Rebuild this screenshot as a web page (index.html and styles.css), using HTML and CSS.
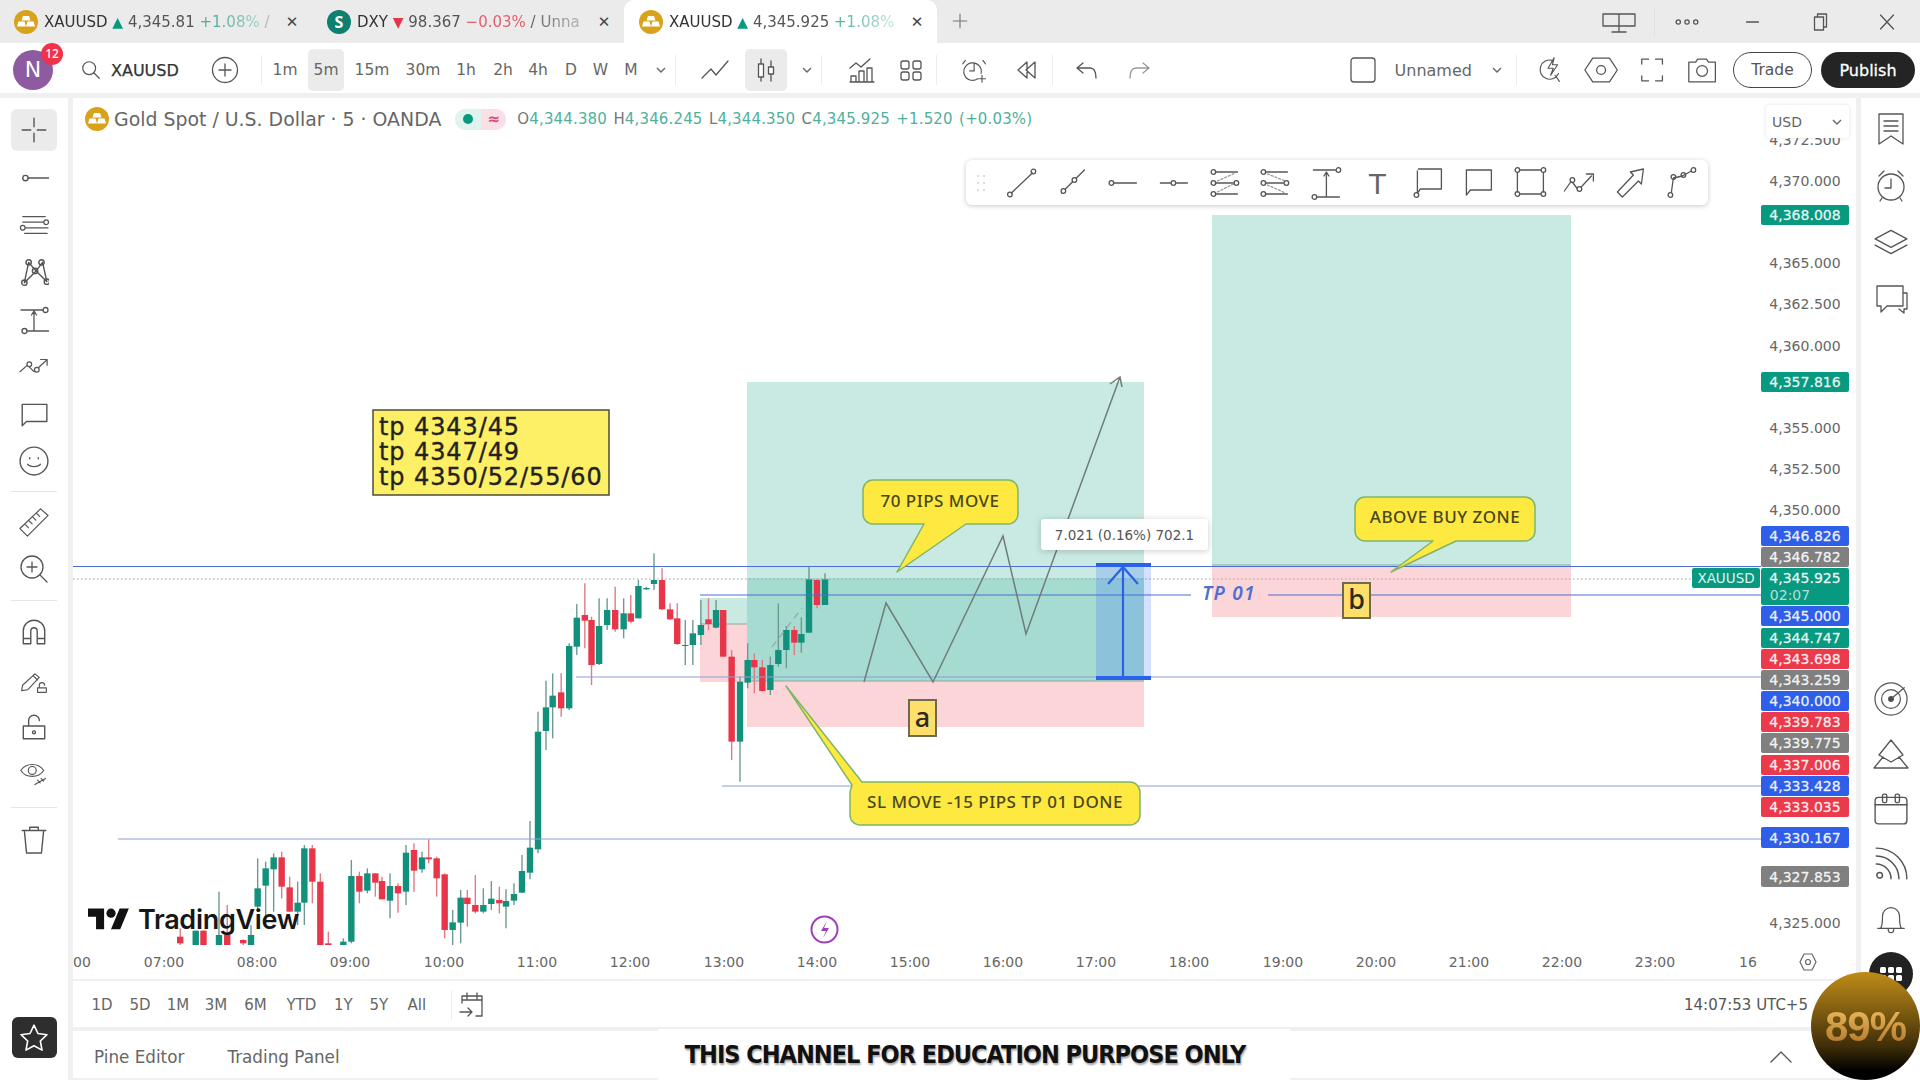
FILE: index.html
```html
<!DOCTYPE html>
<html lang="en">
<head>
<meta charset="utf-8">
<title>XAUUSD chart</title>
<link rel="stylesheet" href="styles.css">
</head>
<body>
<div class="app">
  <header class="tabs">
    <div class="tab">
      <svg class="coin" viewBox="0 0 24 24"><circle cx="12" cy="12" r="12" fill="#d9a21b"/><path class="bars" d="M9 6h6l1.500 4.500h-9zM4.500 11.500h6l1.500 5H3zM13.500 11.500h6l1.500 5h-9z"/></svg>
      <div class="tab-label"><b>XAUUSD</b> <i class="up">▲</i> 4,345.81 <span class="pos">+1.08%</span> /</div>
      <span class="x">✕</span>
    </div>
    <div class="tab">
      <span class="coin dxy">S</span>
      <div class="tab-label"><b>DXY</b> <i class="down">▼</i> 98.367 <span class="neg">−0.03%</span> / Unna</div>
      <span class="x">✕</span>
    </div>
    <div class="tab active">
      <svg class="coin" viewBox="0 0 24 24"><circle cx="12" cy="12" r="12" fill="#d9a21b"/><path class="bars" d="M9 6h6l1.500 4.500h-9zM4.500 11.500h6l1.500 5H3zM13.500 11.500h6l1.500 5h-9z"/></svg>
      <div class="tab-label"><b>XAUUSD</b> <i class="up">▲</i> 4,345.925 <span class="pos">+1.08%</span></div>
      <span class="x">✕</span>
    </div>
    <svg class="plus" viewBox="0 0 20 20"><path d="M10 2v16M2 10h16"/></svg>
    <div class="winctl">
      <svg class="w70 ic" viewBox="0 0 70 28"><path d="M19 6h32v12H19zM35 6v18M28 24h14"/></svg>
      <span class="vsep"></span>
      <svg class="w64 ic" viewBox="0 0 66 28"><circle cx="24" cy="14" r="2.200"/><circle cx="33" cy="14" r="2.200"/><circle cx="42" cy="14" r="2.200"/></svg>
      <svg class="w66 ic" viewBox="0 0 66 28"><path d="M27 14h12"/></svg>
      <svg class="w66 ic" viewBox="0 0 66 28"><path d="M28 9h9v13h-9zM31 9V6h9v13h-3"/></svg>
      <svg class="w66 ic" viewBox="0 0 66 28"><path d="M27 7l13 14M40 7L27 21"/></svg>
    </div>
  </header>

  <nav class="toolbar">
    <div class="avatar">N<span class="badge">12</span></div>
    <svg class="ic search" viewBox="0 0 24 24"><circle cx="10" cy="10" r="7"/><path d="M15 15l6 6"/></svg>
    <span class="sym">XAUUSD</span>
    <svg class="ic addc" viewBox="0 0 28 28"><circle cx="14" cy="14" r="12.500"/><path d="M14 8v12M8 14h12"/></svg>
    <span class="vsep"></span>
    <span class="tf w46">1m</span><span class="tf w36 on">5m</span><span class="tf w56">15m</span><span class="tf w46">30m</span><span class="tf w40">1h</span><span class="tf w34">2h</span><span class="tf w36">4h</span><span class="tf w30">D</span><span class="tf w29">W</span><span class="tf w32">M</span>
    <span class="tf w28"><svg class="chev" viewBox="0 0 10 6"><path d="M1 1l4 4 4-4"/></svg></span>
    <span class="vsep"></span>
    <svg class="ic w50 m14" viewBox="0 0 50 28"><path d="M12 22l9-9 5 6 12-14"/></svg>
    <span class="tf w42 on m5"><svg class="ic cnd" viewBox="0 0 28 28"><path d="M9 3v22M19 5v20"/><rect x="6.500" y="8" width="5" height="13" fill="#fff"/><rect x="16.500" y="11" width="5" height="7" fill="#fff"/></svg></span>
    <span class="tf w28 m6"><svg class="chev" viewBox="0 0 10 6"><path d="M1 1l4 4 4-4"/></svg></span>
    <span class="vsep"></span>
    <svg class="ic w50 m13h" viewBox="0 0 50 28"><path d="M14 26h24M15 26v-6h5v6M23 26V15h5v11M31 26V12h5v14M14 12l6-5 5 4 9-8"/></svg>
    <svg class="ic w50" viewBox="0 0 50 28"><rect x="15" y="5" width="8" height="8" rx="2"/><rect x="27" y="5" width="8" height="8" rx="2"/><rect x="15" y="16" width="8" height="8" rx="2"/><rect x="27" y="16" width="8" height="8" rx="2"/></svg>
    <span class="vsep"></span>
    <svg class="ic w50 m13" viewBox="0 0 50 32"><path d="M28 26a10 10 0 1 1 4-6M24 9v8h-5M14 5l-3 4M34 5l3 4M33 22v8M29 26h8"/></svg>
    <svg class="ic w50 m2" viewBox="0 0 50 28"><path d="M25 6l-9 8 9 8zM33 6l-9 8 9 8z"/></svg>
    <span class="vsep"></span>
    <svg class="ic w50 m10" viewBox="0 0 50 28"><path d="M20 7l-6 5 6 5M14 12h13c5 0 6 5 6 10"/></svg>
    <svg class="ic w50 lite" viewBox="0 0 50 28"><path d="M30 7l6 5-6 5M36 12H23c-5 0-6 5-6 10"/></svg>
    <span class="grow"></span>
    <svg class="ic w44" viewBox="0 0 44 28"><rect x="10" y="2" width="24" height="24" rx="3"/></svg>
    <span class="layout">Unnamed</span>
    <span class="tf w28"><svg class="chev" viewBox="0 0 10 6"><path d="M1 1l4 4 4-4"/></svg></span>
    <span class="vsep"></span>
    <svg class="ic w51" viewBox="0 0 51 32"><path d="M27 5a11 11 0 1 0 7 15M30 22l5 7M29 2l-7 12h6l-3 8 8-12h-6z"/></svg>
    <svg class="ic w51" viewBox="0 0 51 28"><path d="M17 2h17l8 12-8 12H17L9 14z"/><circle cx="25.500" cy="14" r="4.500"/></svg>
    <svg class="ic w51" viewBox="0 0 51 28"><path d="M15 8V3h7M29 3h7v5M36 20v5h-7M22 25h-7v-5"/></svg>
    <svg class="ic w51" viewBox="0 0 51 28"><path d="M12 6h7l2-3h9l2 3h7v20H12z"/><circle cx="25.500" cy="15" r="5.500"/></svg>
    <span class="btn trade">Trade</span>
    <span class="btn publish">Publish</span>
  </nav>

  <div class="main">
    <aside class="lefttools">
      <div class="lt on"><svg class="ic" viewBox="0 0 28 28"><path d="M14 3v8M14 17v8M3 14h8M17 14h8"/></svg></div>
      <div class="lt"><svg class="ic" viewBox="0 0 28 28"><circle cx="6" cy="14" r="2.500"/><path d="M8.500 14H28"/></svg></div>
      <div class="lt"><svg class="ic" viewBox="0 0 32 28"><path d="M4 5h24M4 11h22M7 17h24M6 23h24"/><circle cx="29" cy="11" r="2.500"/><circle cx="4" cy="17" r="2.500"/></svg></div>
      <div class="lt"><svg class="ic" viewBox="0 0 28 28"><path d="M5 24L9 5l7 8 6-8 4 18-10-10z"/><circle cx="5" cy="24" r="2.500"/><circle cx="9" cy="5" r="2.500"/><circle cx="15" cy="13" r="2.500"/><circle cx="21" cy="5" r="2.500"/><circle cx="26" cy="23" r="2.500"/></svg></div>
      <div class="lt"><svg class="ic" viewBox="0 0 30 30"><path d="M2 5h22M8 26h22M15 26V7M12.500 10L15 6l2.500 4"/><circle cx="26.500" cy="5" r="2.500"/><circle cx="5.500" cy="26" r="2.500"/></svg></div>
      <div class="lt"><svg class="ic" viewBox="0 0 32 24"><path d="M1 17l8-7 7 7 13-12M23 4h7v6"/><circle cx="11" cy="9" r="2.500" fill="#fff"/><circle cx="19" cy="15" r="2.500" fill="#fff"/></svg></div>
      <div class="lt"><svg class="ic" viewBox="0 0 28 28"><path d="M3 5h23v16H7l-4 4z"/></svg></div>
      <div class="lt"><svg class="ic" viewBox="0 0 28 28"><circle cx="14" cy="14" r="13"/><path d="M8 17c2 3 10 3 12 0M10 11v1M18 11v1"/></svg></div>
      <div class="lsep s1"></div>
      <div class="lt"><svg class="ic" viewBox="0 0 32 32"><path d="M1 23L23 2l8 7L9 31zM7 19l3 3M11 15l3 3M15 11l3 3M19 7l3 3"/></svg></div>
      <div class="lt"><svg class="ic" viewBox="0 0 30 30"><circle cx="13" cy="13" r="11"/><path d="M13 8v10M8 13h10M21 21l7 7"/></svg></div>
      <div class="lsep s2"></div>
      <div class="lt"><svg class="ic" viewBox="0 0 28 28"><path d="M4 25V13a10 10 0 0 1 20 0v12h-7V13a3 3 0 0 0-6 0v12zM4 20h7M17 20h7"/></svg></div>
      <div class="lt"><svg class="ic" viewBox="0 0 34 30"><path d="M4 21L18 8l5 4-13 14-7 1zM16 10l5 5M21 24h10v5H21zM23 24v-3a3 3 0 0 1 6 0"/></svg></div>
      <div class="lt"><svg class="ic" viewBox="0 0 28 28"><path d="M4 13h20v12H4zM9 13V8a5 5 0 0 1 10 0"/><circle cx="14" cy="19" r="1.400"/></svg></div>
      <div class="lt"><svg class="ic" viewBox="0 0 34 30"><path d="M2 11c6-9 20-9 26 0-6 9-20 9-26 0z"/><circle cx="15" cy="11" r="4.500"/><path d="M18 27l12-7M21 22l3 3M25 20l3 3"/></svg></div>
      <div class="lsep s3"></div>
      <div class="lt"><svg class="ic" viewBox="0 0 28 28"><path d="M5 6h18l-2 21H7zM3 6h22M10 6V3h8v3"/></svg></div>
      <div class="star"><svg viewBox="0 0 28 28"><path d="M14 2l3.700 7.800 8.400 1.100-6.200 5.900 1.600 8.500L14 21.200l-7.500 4.100 1.600-8.500-6.200-5.900 8.400-1.100z"/></svg></div>
    </aside>

    <section class="center">
      <div class="chart">
        <svg class="plot" viewBox="73 98 1783 883" width="1783" height="883">
          <defs><clipPath id="pane"><rect x="73" y="98" width="1688" height="847"/></clipPath></defs>

          <!-- position zones -->
          <rect class="zg" x="747" y="382" width="397" height="299"/>
          <rect class="zd" x="747" y="578" width="397" height="103"/>
          <rect class="zp" x="747" y="681" width="397" height="46"/>
          <rect class="zg" x="1212" y="215" width="359" height="350"/>
          <rect class="zp" x="1212" y="565" width="359" height="52"/>
          <rect class="zg" x="700" y="598" width="47" height="26"/>
          <rect class="zp" x="700" y="624" width="47" height="58"/>
          <path class="zl" d="M700 624h47M747 681h397M1212 565h359"/>

          <g id="candles" clip-path="url(#pane)"></g>
          <path class="dash" d="M772 647l30-39"/>

          <!-- levels -->
          <path class="lv" d="M73 566.500H1761M700 595H1191M1268 595H1761"/>
          <path class="lv soft" d="M576 677H1761M722 786H1761M118 839H1761"/>
          <path class="pxl" d="M73 579H1692"/>

          <!-- forecast path -->
          <path class="fore" d="M864 682l22-79 47 79 70-146 23 98 94-257M1110 384l10-7 2 10"/>

          <!-- measure tool -->
          <rect class="mbox" x="1096" y="563" width="55" height="116"/>
          <path class="mline" d="M1096 565h55M1096 678h55"/>
          <path class="marrow" d="M1123 678V567M1108 584l15-17 15 17"/>

          <!-- callouts -->
          <path class="call" d="M873 480h135a10 10 0 0 1 10 10v24a10 10 0 0 1-10 10h-42l-69 48 27-48h-51a10 10 0 0 1-10-10v-24a10 10 0 0 1 10-10z"/>
          <text class="calltx" x="940" y="507">70 PIPS MOVE</text>
          <path class="call" d="M1365 497h160a10 10 0 0 1 10 10v24a10 10 0 0 1-10 10h-69l-65 31 42-31h-68a10 10 0 0 1-10-10v-24a10 10 0 0 1 10-10z"/>
          <text class="calltx" x="1445" y="523">ABOVE BUY ZONE</text>
          <path class="call" d="M862 782h268a10 10 0 0 1 10 10v23a10 10 0 0 1-10 10H860a10 10 0 0 1-10-10v-23l2-7-66-99z"/>
          <text class="calltx" x="995" y="808">SL MOVE -15 PIPS TP 01 DONE</text>

          <rect class="tag" x="909" y="700" width="27" height="36"/>
          <text class="tagtx" x="922.500" y="727">a</text>
          <rect class="tag" x="1343" y="583" width="27" height="35"/>
          <text class="tagtx" x="1356.500" y="609">b</text>

          <text class="tp01" x="1229" y="600">TP 01</text>

          <rect class="note" x="373" y="410" width="236" height="85"/>
          <text class="notetx" x="379" y="435">tp 4343/45</text>
          <text class="notetx" x="379" y="460">tp 4347/49</text>
          <text class="notetx" x="379" y="485">tp 4350/52/55/60</text>

          <rect class="tipbg" x="1041" y="519" width="167" height="31" rx="3"/>
          <text class="tiptx" x="1124.500" y="540">7.021 (0.16%) 702.1</text>

          <!-- watermark -->
          <g class="tvlogo" transform="translate(88 904) scale(1.150)">
            <path d="M14 22H7V11H0V4h14v18zM28 22h-8l7.500-18h8L28 22z"/><circle cx="20" cy="8" r="4"/>
          </g>
          <text class="tvname" x="138" y="929">TradingView</text>
          <circle class="bolt" cx="824.500" cy="929.500" r="13"/>
          <path class="boltp" d="M827 921l-6 10h5l-3 7 6-10h-5z"/>

          <!-- price axis -->
          <rect x="1761" y="98" width="95" height="847" fill="#fff"/>
          <g class="ptx">
            <text x="1805" y="145">4,372.500</text>
            <text x="1805" y="186">4,370.000</text>
            <text x="1805" y="268">4,365.000</text>
            <text x="1805" y="309">4,362.500</text>
            <text x="1805" y="351">4,360.000</text>
            <text x="1805" y="433">4,355.000</text>
            <text x="1805" y="474">4,352.500</text>
            <text x="1805" y="515">4,350.000</text>
            <text x="1805" y="928">4,325.000</text>
          </g>
          <rect class="pgr" x="1761" y="205" width="88" height="20" rx="2"/><text class="ptl" x="1805" y="220">4,368.008</text>
          <rect class="pgr" x="1761" y="372" width="88" height="20" rx="2"/><text class="ptl" x="1805" y="387">4,357.816</text>
          <rect class="pbl" x="1761" y="526" width="88" height="20" rx="2"/><text class="ptl" x="1805" y="541">4,346.826</text>
          <rect class="pgy" x="1761" y="547" width="88" height="20" rx="2"/><text class="ptl" x="1805" y="562">4,346.782</text>
          <rect class="pgr" x="1761" y="568" width="88" height="37" rx="2"/><text class="ptl" x="1805" y="583">4,345.925</text><text class="ptl dim" x="1790" y="600">02:07</text>
          <rect class="pbl" x="1761" y="606" width="88" height="20" rx="2"/><text class="ptl" x="1805" y="621">4,345.000</text>
          <rect class="pgr" x="1761" y="628" width="88" height="20" rx="2"/><text class="ptl" x="1805" y="643">4,344.747</text>
          <rect class="prd" x="1761" y="649" width="88" height="20" rx="2"/><text class="ptl" x="1805" y="664">4,343.698</text>
          <rect class="pgy" x="1761" y="670" width="88" height="20" rx="2"/><text class="ptl" x="1805" y="685">4,343.259</text>
          <rect class="pbl" x="1761" y="691" width="88" height="20" rx="2"/><text class="ptl" x="1805" y="706">4,340.000</text>
          <rect class="prd" x="1761" y="712" width="88" height="20" rx="2"/><text class="ptl" x="1805" y="727">4,339.783</text>
          <rect class="pgy" x="1761" y="733" width="88" height="20" rx="2"/><text class="ptl" x="1805" y="748">4,339.775</text>
          <rect class="prd" x="1761" y="755" width="88" height="20" rx="2"/><text class="ptl" x="1805" y="770">4,337.006</text>
          <rect class="pbl" x="1761" y="776" width="88" height="20" rx="2"/><text class="ptl" x="1805" y="791">4,333.428</text>
          <rect class="prd" x="1761" y="797" width="88" height="20" rx="2"/><text class="ptl" x="1805" y="812">4,333.035</text>
          <rect class="pbl" x="1761" y="827" width="88" height="21" rx="2"/><text class="ptl" x="1805" y="843">4,330.167</text>
          <rect class="pgy" x="1761" y="866" width="88" height="21" rx="2"/><text class="ptl" x="1805" y="882">4,327.853</text>
          <rect class="pgr" x="1692" y="568" width="68" height="20" rx="2"/><text class="ptl sm" x="1726" y="583">XAUUSD</text>

          <!-- time axis -->
          <g class="ttx">
            <text x="82" y="967">00</text><text x="164" y="967">07:00</text><text x="257" y="967">08:00</text><text x="350" y="967">09:00</text><text x="444" y="967">10:00</text><text x="537" y="967">11:00</text><text x="630" y="967">12:00</text><text x="724" y="967">13:00</text><text x="817" y="967">14:00</text><text x="910" y="967">15:00</text><text x="1003" y="967">16:00</text><text x="1096" y="967">17:00</text><text x="1189" y="967">18:00</text><text x="1283" y="967">19:00</text><text x="1376" y="967">20:00</text><text x="1469" y="967">21:00</text><text x="1562" y="967">22:00</text><text x="1655" y="967">23:00</text><text x="1748" y="967">16</text>
          </g>
          <path class="hexi" d="M1804 954h8l4 8-4 8h-8l-4-8z"/><circle class="hexi" cx="1808" cy="962" r="2.500"/>
        </svg>

        <div class="legend">
          <svg class="coin" viewBox="0 0 24 24"><circle cx="12" cy="12" r="12" fill="#d9a21b"/><path class="bars" d="M9 6h6l1.500 4.500h-9zM4.500 11.500h6l1.500 5H3zM13.500 11.500h6l1.500 5h-9z"/></svg>
          <span class="title">Gold Spot / U.S. Dollar · 5 · OANDA</span>
          <span class="status"><span class="st-a"><i></i></span><span class="st-b">≈</span></span>
          <span class="ohlc"><em>O</em>4,344.380 <em>H</em>4,346.245 <em>L</em>4,344.350 <em>C</em>4,345.925 +1.520 (+0.03%)</span>
        </div>

        <div class="usd">USD <svg class="chev" viewBox="0 0 10 6"><path d="M1 1l4 4 4-4"/></svg></div>

        <div class="drawbar">
          <svg class="grip" viewBox="0 0 10 20"><g><circle cx="2" cy="3" r="1"/><circle cx="8" cy="3" r="1"/><circle cx="2" cy="10" r="1"/><circle cx="8" cy="10" r="1"/><circle cx="2" cy="17" r="1"/><circle cx="8" cy="17" r="1"/></g></svg>
          <svg class="ic db" viewBox="0 0 34 34"><path d="M7 27L28 7"/><circle cx="5.500" cy="28.500" r="2.300"/><circle cx="29" cy="5.500" r="2.300"/></svg>
          <svg class="ic db" viewBox="0 0 34 34"><path d="M6 27L29 4"/><circle cx="8" cy="25" r="2.300" fill="#fff"/><circle cx="19" cy="14" r="2.300" fill="#fff"/></svg>
          <svg class="ic db" viewBox="0 0 34 34"><circle cx="5" cy="17" r="2.300"/><path d="M7.500 17H30"/></svg>
          <svg class="ic db" viewBox="0 0 34 34"><path d="M3 17h10M19 17h11"/><circle cx="16" cy="17" r="2.300"/></svg>
          <svg class="ic db" viewBox="0 0 34 34"><path d="M7 6h22M7 17h18M7 28h22"/><path class="dots-l" d="M9 15l18-8M9 26l16-8"/><circle cx="5" cy="6" r="2.300"/><circle cx="28" cy="17" r="2.300"/><circle cx="5" cy="17" r="2.300"/><circle cx="5" cy="28" r="2.300"/></svg>
          <svg class="ic db" viewBox="0 0 34 34"><path d="M7 6h22M7 17h18M7 28h22"/><path class="dots-l" d="M9 8l18 7M9 19l18 8"/><circle cx="5" cy="6" r="2.300"/><circle cx="28" cy="17" r="2.300"/><circle cx="5" cy="17" r="2.300"/><circle cx="5" cy="28" r="2.300"/></svg>
          <svg class="ic db" viewBox="0 0 34 34"><path d="M4 4h22M8 31h22M17 31V7M14.500 10L17 6l2.500 4"/><circle cx="29" cy="4" r="2.300"/><circle cx="5" cy="31" r="2.300"/></svg>
          <svg class="ic db" viewBox="0 0 34 34"><text class="tglyph" x="17" y="28">T</text></svg>
          <svg class="ic db" viewBox="0 0 34 34"><path d="M7 3h23v20H9l-3 4V5"/><circle cx="5" cy="29" r="2.300"/></svg>
          <svg class="ic db" viewBox="0 0 34 34"><path d="M4 4h25v20H8l-4 5z"/></svg>
          <svg class="ic db" viewBox="0 0 34 34"><path d="M8 4h20M8 28h20M5 7v19M31 7v19"/><circle cx="5" cy="4" r="2.300"/><circle cx="31" cy="4" r="2.300"/><circle cx="5" cy="28" r="2.300"/><circle cx="31" cy="28" r="2.300"/></svg>
          <svg class="ic db" viewBox="0 0 36 34"><path d="M2 25l7-10 7 9 13-14M24 8h7v7"/><circle cx="10" cy="14" r="2.300" fill="#fff"/><circle cx="17" cy="23" r="2.300" fill="#fff"/></svg>
          <svg class="ic db" viewBox="0 0 34 34"><path d="M29 3L16 6l3 3L3 26l5 5 16-16 3 3z"/></svg>
          <svg class="ic db" viewBox="0 0 34 34"><path d="M6 26L8 12l9-2 9-5"/><circle cx="5" cy="29" r="2.300"/><circle cx="8" cy="11" r="2.300"/><circle cx="18" cy="9" r="2.300"/><circle cx="28" cy="4" r="2.300"/></svg>
        </div>
      </div>

      <div class="ranges">
        <span class="r w38">1D</span><span class="r w38">5D</span><span class="r w38">1M</span><span class="r w38">3M</span><span class="r w38 m1">6M</span><span class="r w46 m4">YTD</span><span class="r w38">1Y</span><span class="r w33">5Y</span><span class="r w40 m1">All</span>
        <span class="vsep rsep"></span>
        <svg class="ic cal" viewBox="0 0 28 28"><path d="M4 12V5h20v20h-6M9 2v6M19 2v6M4 9h20M2 21h11M10 17l4 4-4 4"/></svg>
        <span class="grow"></span>
        <span class="clock">14:07:53 UTC+5</span>
      </div>

      <div class="bottom">
        <span class="bt">Pine Editor</span><span class="bt">Trading Panel</span>
        <span class="grow"></span>
        <svg class="ic upchev" viewBox="0 0 24 14"><path d="M2 12L12 2l10 10"/></svg>
      </div>
    </section>

    <aside class="righttools">
      <div class="rt"><svg class="ic" viewBox="0 0 30 34"><path d="M3 2h24v30l-12-8-12 8zM8 9h14M8 14h14M8 19h14"/></svg></div>
      <div class="rt"><svg class="ic" viewBox="0 0 32 34"><circle cx="16" cy="18" r="13"/><path d="M16 10v9h-6M4 7l5-5M28 7l-5-5M7 29l-2 3M25 29l2 3"/></svg></div>
      <div class="rt"><svg class="ic" viewBox="0 0 34 28"><path d="M17 3l15 8-15 8-15-8zM2 17l15 8 15-8"/></svg></div>
      <div class="rt"><svg class="ic" viewBox="0 0 36 32"><path d="M4 3h26v20H14l-6 6v-6H4zM30 10h4v16h-3v4l-5-4"/></svg></div>
      <div class="rspace"></div>
      <div class="rt"><svg class="ic" viewBox="0 0 38 36"><circle cx="19" cy="18" r="17"/><circle cx="19" cy="18" r="10"/><circle cx="19" cy="18" r="2.500" fill="#444"/><path d="M19 18L33 6"/></svg></div>
      <div class="rt"><svg class="ic" viewBox="0 0 36 32"><path d="M18 2L6 17l12 7 12-7zM10 19L1 30h34l-9-11"/></svg></div>
      <div class="rt"><svg class="ic" viewBox="0 0 34 32"><rect x="2" y="5" width="30" height="25" rx="3"/><path d="M2 12h30"/><rect x="9" y="2" width="4" height="8" rx="1.500"/><rect x="21" y="2" width="4" height="8" rx="1.500"/></svg></div>
      <div class="rt"><svg class="ic" viewBox="0 0 30 30"><circle cx="5" cy="25" r="2.500"/><path d="M2 15a13 13 0 0 1 13 13M2 8a20 20 0 0 1 20 20M2 1a27 27 0 0 1 27 27"/></svg></div>
      <div class="rt"><svg class="ic" viewBox="0 0 32 36"><path d="M5 28c2-3 2-8 2-13a9 9 0 0 1 18 0c0 5 0 10 2 13zM2 28h28M13 28c0 6 6 6 6 0"/></svg></div>
      <div class="rt"><span class="dots"><i></i><i></i><i></i><i></i><i></i><i></i></span></div>
    </aside>
  </div>

  <div class="banner">THIS CHANNEL FOR EDUCATION PURPOSE ONLY</div>
  <div class="meter"><span>89%</span></div>
</div>
<script src="chart.js"></script>
</body>
</html>
```

FILE: styles.css
```css
* { box-sizing: border-box; }
html, body { margin: 0; height: 100%; overflow: hidden; }
body { font-family: "DejaVu Sans", "Noto Sans", sans-serif; color: #555; background: #fff; }
.app { position: relative; width: 1920px; height: 1080px; display: flex; flex-direction: column; background: #f0f0f0; }
.grow { flex: 1 1 auto; }

.ic { fill: none; stroke: #555; stroke-width: 1.300; stroke-linecap: round; stroke-linejoin: round; flex: none; }
.chev { width: 10px; height: 6px; fill: none; stroke: #666; stroke-width: 1.400; }
.vsep { width: 1px; height: 30px; background: #ececec; flex: none; }

/* tab strip */
.tabs { height: 43px; display: flex; align-items: stretch; background: #ebebeb; flex: none; }
.tab { width: 312px; display: flex; align-items: center; padding: 0 10px 0 14px; gap: 6px; font-size: 15px; }
.tab:nth-child(2) { width: 312px; padding-left: 15px; }
.tab.active { background: #fff; border-radius: 10px 10px 0 0; width: 313px; padding-left: 15px; }
.coin { width: 24px; height: 24px; flex: none; }
.bars { fill: #fff; }
.dxy { border-radius: 50%; background: #0f7f6f; color: #fff; font: 700 16px/24px "Noto Sans", sans-serif; text-align: center; }
.tab-label { flex: 1; overflow: hidden; white-space: nowrap; -webkit-mask-image: linear-gradient(to right, #000 72%, rgba(0,0,0,.25) 100%); mask-image: linear-gradient(to right, #000 72%, rgba(0,0,0,.25) 100%); }
.tab-label b { font-weight: 400; color: #333; }
.tab-label i { font-style: normal; font-size: 14px; }
.up { color: #089981; }
.down { color: #e5354a; }
.pos { color: #4fb09c; }
.neg { color: #e35f6d; }
.x { color: #444; font-size: 15px; width: 20px; text-align: center; }
.plus { width: 18px; height: 18px; margin: 12px 0 0 14px; fill: none; stroke: #777; stroke-width: 1.300; }
.winctl { margin-left: auto; display: flex; align-items: center; height: 43px; }
.w70 { width: 70px; height: 28px; }
.w66 { width: 67px; height: 28px; }
.w64 { width: 64px; height: 28px; }
.winctl .vsep { height: 30px; background: #e0e0e0; }

/* main toolbar */
.toolbar { height: 50px; flex: none; display: flex; align-items: center; background: #fff; padding: 4px 5px 0 13px; margin-bottom: 5px; font-size: 16px; }
.avatar { position: relative; width: 40px; height: 40px; border-radius: 50%; background: #8e5aa0; color: #fff; font-size: 22px; line-height: 40px; text-align: center; flex: none; }
.badge { position: absolute; top: -7px; right: -10px; width: 22px; height: 22px; border-radius: 50%; background: #f0324a; color: #fff; font: 500 12px/22px "Noto Sans", sans-serif; text-align: center; }
.search { width: 22px; height: 22px; margin-left: 27px; }
.sym { color: #333; margin-left: 9px; width: 72px; -webkit-text-stroke: .25px #333; }
.addc { width: 28px; height: 28px; margin-left: 28px; }
.addc + .vsep { margin-left: 22px; }
.tf { height: 42px; display: flex; align-items: center; justify-content: center; flex: none; border-radius: 5px; color: #666; font-size: 15.500px; }
.tf.on { background: #ebebeb; }
.w28 { width: 28px; } .w29 { width: 29px; } .w30 { width: 30px; } .w32 { width: 32px; } .w33 { width: 33px; } .w34 { width: 34px; } .w36 { width: 36px; } .w38 { width: 38px; } .w40 { width: 40px; } .w42 { width: 42px; } .w44 { width: 44px; height: 28px; } .w46 { width: 46px; } .w50 { width: 50px; height: 28px; } .w51 { width: 50.200px; height: 28px; } .w56 { width: 56px; }
.m1 { margin-left: 1.400px; } .m2 { margin-left: 2px; } .m4 { margin-left: 4px; } .m5 { margin-left: 5px; } .m6 { margin-left: 6px; } .m10 { margin-left: 10px; } .m13 { margin-left: 13px; } .m13h { margin-left: 13.500px; } .m14 { margin-left: 14px; }
.cnd { width: 28px; height: 28px; }
.layout { width: 80px; text-align: center; margin-left: 8px; color: #666; }
.layout + .tf { margin-left: 10px; }
.layout + .tf + .vsep { margin: 0 9px 0 5px; }
.lite { stroke: #999; }
.btn { height: 36px; border-radius: 18px; display: flex; align-items: center; justify-content: center; flex: none; }
.trade { width: 79px; border: 1.500px solid #444; color: #555; margin-left: 6px; font-size: 15.500px; }
.publish { width: 94px; background: #242424; color: #fff; margin-left: 9px; -webkit-text-stroke: .3px #fff; }

/* body */
.main { flex: 1; display: flex; min-height: 0; gap: 5px; }
.lefttools { width: 68px; flex: none; background: #fff; display: flex; flex-direction: column; align-items: center; padding-top: 9px; }
.lt { width: 46px; height: 47.300px; display: flex; align-items: center; justify-content: center; flex: none; }
.lt.on { height: 42px; margin: 2px 0 3px; background: #ebebeb; border-radius: 6px; }
.lt svg { width: 30px; height: 30px; }
.lsep { width: 46px; border-top: 1px solid #e6e6e6; flex: none; }
.s1 { margin: 6px 0 6px; }
.s2 { margin: 7px 0 8px; }
.s3 { margin: 9px 0 7px; }
.star { margin-top: auto; margin-bottom: 22px; width: 45px; height: 41px; border-radius: 6px; background: #2e2e2e; display: flex; align-items: center; justify-content: center; }
.star svg { width: 30px; height: 30px; fill: #2e2e2e; stroke: #fff; stroke-width: 1.500; stroke-linejoin: round; }

.center { flex: 0 0 1783px; display: flex; flex-direction: column; }
.chart { position: relative; height: 883px; background: #fff; flex: none; overflow: hidden; border-bottom: 2px solid #f0f0f0; }
.plot { display: block; font-family: "DejaVu Sans", sans-serif; }

/* chart drawings */
.zg { fill: #c9e9e3; } .zd { fill: #a5dbd1; } .zp { fill: #fcd5d9; }
.zl { fill: none; stroke: #8fa6a2; stroke-width: 1; }
.dash { fill: none; stroke: #9aa5a3; stroke-width: 1.200; stroke-dasharray: 7 5; }
.lv { fill: none; stroke: #4c6fd3; stroke-width: 1.200; }
.lv.soft { stroke: #8d9dd8; }
.pxl { fill: none; stroke: #9aa0a0; stroke-width: 1; stroke-dasharray: 1.500 2.500; }
.fore { fill: none; stroke: #6f7c7a; stroke-width: 1.500; }
.mbox { fill: rgba(41, 98, 255, .2); }
.mline { fill: none; stroke: #2962e8; stroke-width: 4; }
.marrow { fill: none; stroke: #2962e8; stroke-width: 2.200; }
.call { fill: #fde93f; stroke: #7fb56a; stroke-width: 1.500; stroke-linejoin: round; }
.calltx { font: 500 17px "Noto Sans", sans-serif; fill: #4a4620; text-anchor: middle; letter-spacing: .5px; -webkit-text-stroke: .2px #4a4620; }
.tag { fill: #ffdf6b; stroke: #6d6a50; stroke-width: 2; }
.tagtx { font: 500 27px "Noto Sans", sans-serif; fill: #2b2b20; text-anchor: middle; }
.tp01 { font: italic 600 19px "Noto Sans", sans-serif; fill: #4c6fd3; text-anchor: middle; letter-spacing: 1.300px; }
.note { fill: #fdef66; stroke: #4d4d3a; stroke-width: 1.500; }
.notetx { font: 400 24px "DejaVu Sans", sans-serif; fill: #222; letter-spacing: .9px; stroke: #222; stroke-width: .35px; }
.tipbg { fill: #fff; filter: drop-shadow(0 1px 3px rgba(0,0,0,.2)); }
.tiptx { font-size: 13.500px; fill: #555; text-anchor: middle; }
.tvlogo { fill: #111; }
.tvname { font: 600 27px Inter, sans-serif; fill: #161616; letter-spacing: -.3px; }
.bolt { fill: #fff; stroke: #a040b8; stroke-width: 2; }
.boltp { fill: #a040b8; }
.ptx text { font-size: 14px; fill: #666; text-anchor: middle; }
.ttx text { font-size: 14px; fill: #666; text-anchor: middle; }
.hexi { fill: none; stroke: #666; stroke-width: 1.200; }
.pgr { fill: #089981; } .pbl { fill: #2f5fe8; } .pgy { fill: #808080; } .prd { fill: #ea3a4c; }
.ptl { font-size: 14px; fill: #fff; fill-opacity: .9; text-anchor: middle; stroke: #fff; stroke-opacity: .7; stroke-width: .35px; }
.ptl.dim { fill-opacity: .7; stroke-width: 0; }
.ptl.sm { font-size: 13.500px; stroke-width: 0; }

.legend { position: absolute; left: 12px; top: 8px; display: flex; align-items: center; height: 26px; }
.legend .title { margin-left: 5px; font-size: 18.900px; color: #666; white-space: nowrap; }
.status { display: flex; margin-left: 14px; height: 21px; border-radius: 10px; overflow: hidden; flex: none; }
.st-a { width: 26px; background: #dff3ef; display: flex; align-items: center; justify-content: center; }
.st-a i { width: 10px; height: 10px; border-radius: 50%; background: #089981; }
.st-b { width: 25px; background: #fbdfe6; color: #d6477a; font-size: 15px; line-height: 21px; text-align: center; font-weight: 700; }
.ohlc { margin-left: 11px; font-size: 15px; letter-spacing: .15px; word-spacing: 1.500px; color: #4fb09c; white-space: nowrap; }
.ohlc em { font-style: normal; color: #777; }
.usd { position: absolute; left: 1693px; top: 7px; width: 83px; height: 33px; background: #fff; border-radius: 4px; box-shadow: 0 0 4px rgba(0,0,0,.12); font-size: 14px; color: #666; display: flex; align-items: center; justify-content: space-between; padding: 0 7px 0 6px; }
.drawbar { position: absolute; left: 893px; top: 62px; width: 742px; height: 45px; background: #fff; border-radius: 6px; box-shadow: 0 1px 5px rgba(0,0,0,.22); display: flex; align-items: center; padding-left: 10px; }
.grip { width: 10px; height: 20px; fill: #cfcfcf; margin-right: 10.400px; flex: none; }
.db { width: 50.800px; height: 34px; }
.dots-l { stroke: #999; stroke-dasharray: 2 2; }
.tglyph { font: 400 30px "Liberation Sans", sans-serif; fill: #666; stroke: none; text-anchor: middle; }

/* range bar */
.ranges { height: 46px; flex: none; background: #fff; display: flex; align-items: center; padding: 2px 0 0 10px; font-size: 15px; color: #666; }
.r { text-align: center; flex: none; }
.rsep { margin-left: 14px; }
.cal { width: 28px; height: 28px; margin-left: 6px; }
.clock { width: 172px; font-size: 15px; white-space: nowrap; color: #555; }
.bottom { margin-top: 4px; height: 47px; flex: none; background: #fff; display: flex; align-items: center; padding: 5px 0 0 21px; font-size: 16.800px; color: #666; }
.bt { margin-right: 43px; }
.upchev { width: 24px; height: 14px; margin-right: 63px; }

/* right rail */
.righttools { flex: 1; background: #fff; display: flex; flex-direction: column; align-items: center; padding-top: 9px; }
.rt { height: 44px; width: 46px; flex: none; display: flex; align-items: center; justify-content: center; margin-bottom: 12.500px; }
.rt svg { width: 36px; height: 34px; }
.rspace { height: 344px; flex: none; }
.rspace ~ .rt { margin-bottom: 11px; }
.dots { width: 44px; height: 44px; border-radius: 50%; background: #222; display: grid; grid-template-columns: repeat(3, 6px); gap: 2px; justify-content: center; align-content: center; }
.dots i { width: 6px; height: 6px; background: #fff; border-radius: 1.500px; }

/* video overlays */
.banner { position: absolute; left: 658px; top: 1029px; width: 632px; height: 51px; background: #fff; display: flex; align-items: center; justify-content: center; padding-right: 18px; font: 800 25px "DejaVu Sans Condensed", "DejaVu Sans", sans-serif; color: #111; letter-spacing: -1px; text-shadow: 1px 2px 2px rgba(0,0,0,.35); white-space: nowrap; }
.meter { position: absolute; left: 1811px; top: 972px; width: 109px; height: 108px; border-radius: 50%; background: linear-gradient(#c08c18 0%, #8b6512 30%, #3c2c08 70%, #000 92%); display: flex; align-items: center; justify-content: center; }
.meter span { font: 700 42px "Liberation Sans", sans-serif; letter-spacing: -1px; background: linear-gradient(#f4c464, #a86c22); -webkit-background-clip: text; background-clip: text; color: transparent; position: relative; top: 1px; }
```

FILE: chart.js
```js
// Candles read off the chart: [x, colour, wickTop, bodyTop, bodyBottom, wickBottom]
const toA = (c) => [60 + c[0] / 2.063, c[1], 780 + c[2] / 3, 780 + c[3] / 3, 780 + c[4] / 3, 780 + c[5] / 3];
const toB = (c) => [240 + c[0] / 3, c[1], 550 + c[2] / 3, 550 + c[3] / 3, 550 + c[4] / 3, 550 + c[5] / 3];
const toC = (c) => [500 + c[0] / 2.24, c[1], 530 + c[2] / 3, 530 + c[3] / 3, 530 + c[4] / 3, 530 + c[5] / 3];
const toD = (c) => [720 + c[0] / 3, c[1], 540 + c[2] / 3, 540 + c[3] / 3, 540 + c[4] / 3, 540 + c[5] / 3];

const partA = [
  [248,'r',445,470,490,495],[280,'g',452,452,495,495],[296,'r',452,452,495,495],
  [328,'g',335,465,495,495],[345,'r',375,465,495,495],[378,'r',478,480,490,495]
].map(toA);

const partB = [
  [33,'g',1125,1155,1185,1190],[53,'g',925,1015,1070,1080],[77,'g',935,955,1007,1120],[101,'g',910,922,958,1085],
  [125,'r',905,922,1010,1045],[149,'r',980,1012,1085,1085],[173,'g',995,1058,1085,1125],[193,'g',885,895,1058,1125],
  [217,'r',885,895,995,1060],[241,'r',970,995,1190,1190],[265,'r',1145,1180,1190,1190],[310,'g',1165,1175,1190,1190],
  [334,'g',930,978,1175,1180],[358,'r',965,978,1025,1060],[382,'g',955,970,1022,1030],[406,'r',970,970,998,1040],
  [426,'r',980,993,1048,1048],[450,'g',970,1008,1052,1105],[474,'r',1000,1008,1030,1088],[498,'g',885,908,1025,1065],
  [522,'r',880,900,962,1025],[546,'g',905,922,958,968],[566,'r',868,922,928,940],[590,'r',920,925,985,1040],
  [614,'r',970,973,1140,1165],[638,'g',1080,1117,1140,1185],[662,'g',1020,1043,1118,1180],[682,'r',1020,1043,1062,1130],
  [706,'r',975,1065,1085,1090],[730,'g',1015,1065,1085,1090],[754,'g',993,1046,1062,1080],[778,'r',1010,1050,1060,1090],
  [798,'g',1018,1053,1070,1135],[822,'g',1000,1032,1052,1065],[846,'g',915,963,1028,1030],[870,'g',813,893,968,988],
  [894,'g',485,545,898,910],[918,'g',392,472,543,600],[938,'g',370,437,472,565]
].map(toB);

const partC = [
  [137,'r',430,487,535,560],[155,'g',340,348,535,540],[172,'g',222,263,350,375],[190,'r',160,255,272,355],
  [205,'r',260,270,405,465],[222,'g',205,288,402,405],[240,'g',205,240,285,300],[258,'r',170,240,298,305],
  [277,'g',205,250,298,325],[293,'r',195,250,275,280],[310,'g',150,168,265,265],[328,'g',170,174,178,180],
  [345,'g',70,150,162,180],[363,'r',115,150,238,240],[381,'r',220,238,268,270],[397,'r',220,265,342,345],
  [415,'g',270,345,347,405],[432,'g',270,310,345,405],[450,'g',210,285,315,345],[467,'r',205,268,282,300],
  [484,'g',210,240,293,295],[500,'r',240,240,380,380]
].map(toC);

const partD = [
  [35,'r',330,350,605,660],[60,'g',410,425,605,725],[83,'g',310,360,428,445],[103,'r',340,360,382,460],
  [127,'r',360,382,453,455],[151,'g',350,375,450,465],[175,'g',190,330,372,380],[199,'g',258,270,330,385],
  [223,'r',258,270,308,345],[244,'g',232,282,308,338],[267,'g',80,118,278,278],[291,'r',118,120,195,205],
  [315,'g',100,118,195,195]
].map(toD);

const colour = { g: '#11917c', r: '#e7364a' };
const layer = document.getElementById('candles');
const NS = 'http://www.w3.org/2000/svg';

[...partA, ...partB, ...partC, ...partD].forEach(([x, c, wt, bt, bb, wb]) => {
  const wick = document.createElementNS(NS, 'line');
  wick.setAttribute('x1', x); wick.setAttribute('x2', x);
  wick.setAttribute('y1', wt); wick.setAttribute('y2', wb);
  wick.setAttribute('stroke', c === 'g' ? '#6d9a90' : '#e27a85');
  wick.setAttribute('stroke-width', '1.400');
  layer.appendChild(wick);

  const body = document.createElementNS(NS, 'rect');
  body.setAttribute('x', x - 3.2); body.setAttribute('width', 6.4);
  body.setAttribute('y', bt); body.setAttribute('height', Math.max(bb - bt, 1));
  body.setAttribute('fill', colour[c]);
  layer.appendChild(body);
});
```
